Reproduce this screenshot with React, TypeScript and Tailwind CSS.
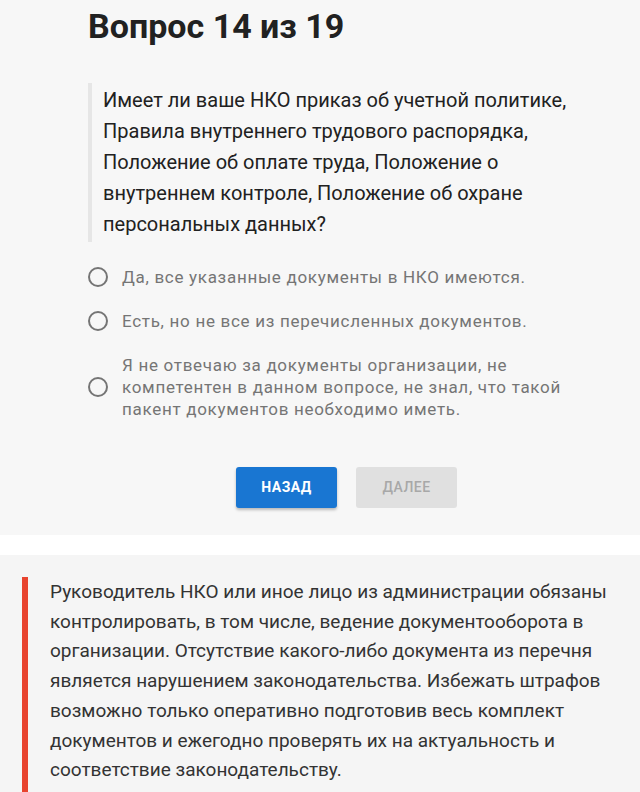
import React, { useState } from 'react';

const options = [
  'Да, все указанные документы в НКО имеются.',
  'Есть, но не все из перечисленных документов.',
  'Я не отвечаю за документы организации, не компетентен в данном вопросе, не знал, что такой пакент документов необходимо иметь.',
];

export default function App() {
  const [selected, setSelected] = useState<number | null>(null);

  return (
    <div className="min-h-[792px] bg-white font-['Roboto',sans-serif]">
      {/* Question card */}
      <div className="bg-[#f7f7f7] pl-[88px] pr-[40px] pt-[4px] pb-[27px]">
        <h1 className="text-[34px] font-bold leading-[44px] text-[#212121]">Вопрос 14 из 19</h1>

        <div className="mt-[35px] border-l-4 border-[#e6e6e6] pl-[11px] py-[2px]">
          <p className="text-[20px] leading-[31px] text-[#212121]">
            Имеет ли ваше НКО приказ об учетной политике, Правила внутреннего трудового распорядка, Положение об
            оплате труда, Положение о внутреннем контроле, Положение об охране персональных данных?
          </p>
        </div>

        <div className="mt-[24px] flex flex-col gap-[22px]">
          {options.map((opt, i) => (
            <label key={i} className="flex items-center gap-[14px] cursor-pointer">
              <span
                className="flex h-[20px] w-[20px] shrink-0 items-center justify-center rounded-full border-2 border-[#757575]"
                onClick={() => setSelected(i)}
              >
                {selected === i && <span className="h-[10px] w-[10px] rounded-full bg-[#1976d2]" />}
              </span>
              <span className="text-[17px] leading-[22px] tracking-[0.7px] text-[#757575]">{opt}</span>
            </label>
          ))}
        </div>

        <div className="mt-[47px] flex gap-[19px] pl-[148px]">
          <button className="h-[41px] w-[101px] rounded-[3px] bg-[#1976d2] text-[14px] font-bold tracking-[0.5px] text-white shadow-[0_2px_3px_rgba(0,0,0,0.25)]">
            НАЗАД
          </button>
          <button disabled className="h-[41px] w-[101px] rounded-[3px] bg-[#e0e0e0] text-[14px] font-medium tracking-[0.5px] text-[#a8a8a8]">
            ДАЛЕЕ
          </button>
        </div>
      </div>

      <div className="h-[20px] bg-white" />

      {/* Comment */}
      <div className="bg-[#f5f5f5] pl-[22px] pt-[22px] min-h-[240px]">
        <div className="border-l-[6px] border-[#e8432e] pl-[22px] pb-[20px] pr-[10px]">
          <p className="text-[19px] leading-[29.7px] text-[#333333]">
            Руководитель НКО или иное лицо из администрации обязаны контролировать, в том числе, ведение
            документооборота в организации. Отсутствие какого-либо документа из перечня является нарушением
            законодательства. Избежать штрафов возможно только оперативно подготовив весь комплект документов и
            ежегодно проверять их на актуальность и соответствие законодательству.
          </p>
        </div>
      </div>
    </div>
  );
}
